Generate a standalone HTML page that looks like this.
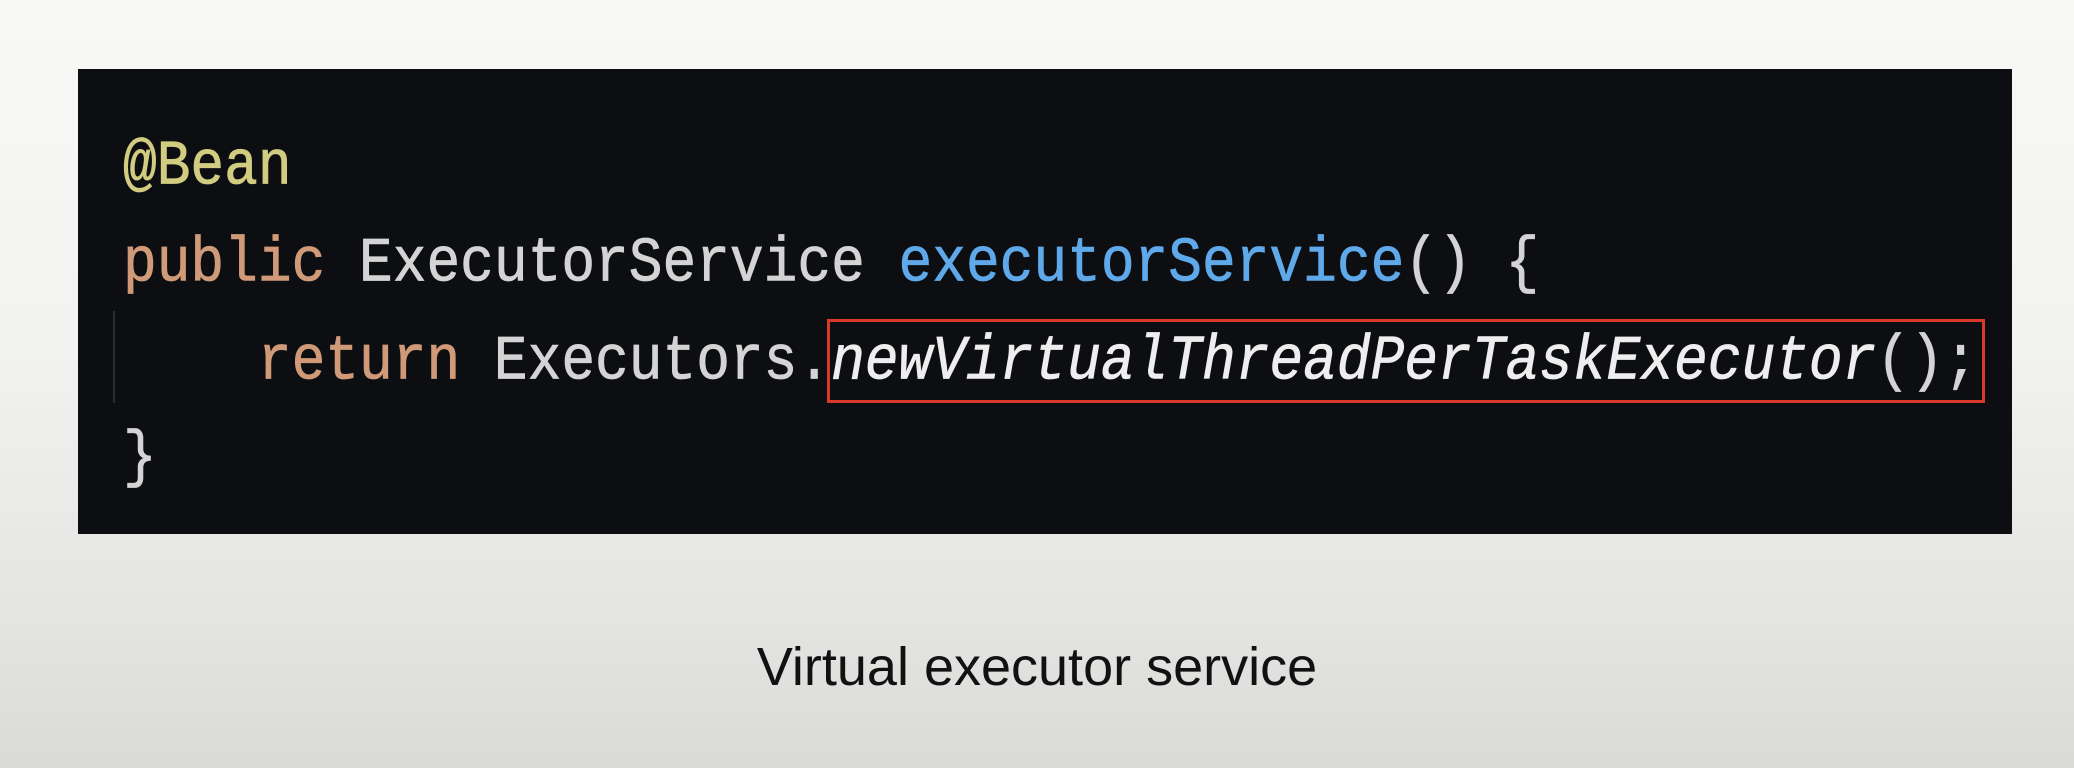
<!DOCTYPE html>
<html><head><meta charset="utf-8"><style>
html,body{margin:0;padding:0}
body{width:2074px;height:768px;overflow:hidden;position:relative;background:linear-gradient(#f8f8f6 0%,#f2f2f0 45%,#e4e4e2 80%,#dadad8 100%);font-family:"Liberation Mono",monospace}
.code{position:absolute;left:78px;top:69px;width:1934px;height:465px;background:#0c0e11}
.ln{position:absolute;left:123px;font-size:56.2px;line-height:1;white-space:pre;transform:scaleY(1.13);transform-origin:0 100%;color:#d4d4d4;-webkit-text-stroke:0.7px currentColor}
.y{color:#d2cc80}.o{color:#d09a78}.b{color:#5fa9ea}.i{font-style:italic;color:#eeeeee}
.box{position:absolute;left:827px;top:319px;width:1152px;height:78px;border:3px solid #d8392a}
.guide{position:absolute;left:113px;top:311px;width:2px;height:92px;background:#2a2c30}
.cap{position:absolute;left:0;width:2074px;top:636px;text-align:center;font-family:"Liberation Sans",sans-serif;font-size:54px;color:#111}
.cap span{display:inline-block;transform:scaleX(1.0)}
</style></head><body>
<div class="code"></div>
<div class="guide"></div>
<div class="ln y" style="top:142px">@Bean</div>
<div class="ln" style="top:239px"><span class="o">public</span> ExecutorService <span class="b">executorService</span>() {</div>
<div class="ln" style="top:337px">    <span class="o">return</span> Executors.<span class="i">newVirtualThreadPerTaskExecutor</span>();</div>
<div class="ln" style="top:433px">}</div>
<div class="box"></div>
<div class="cap"><span>Virtual executor service</span></div>
</body></html>
